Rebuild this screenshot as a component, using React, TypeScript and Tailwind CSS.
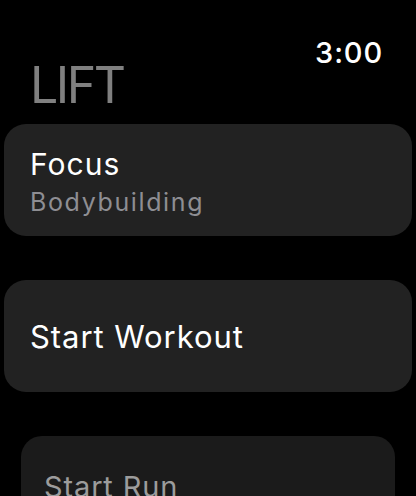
export default function App() {
  return (
    <div className="w-[416px] h-[496px] overflow-hidden bg-black font-['Inter','Liberation_Sans',sans-serif] select-none">
      {/* Status: time */}
      <div className="pt-[38px] pr-[33px] flex justify-end">
        <span className="text-[29px] leading-[29px] font-medium text-white tracking-[0.03em]">3:00</span>
      </div>

      {/* Title */}
      <h1 className="pl-[30px] text-[50px] leading-[36px] font-normal text-[#808080] tracking-[-0.05em] mb-[21px]">LIFT</h1>

      <div className="flex flex-col gap-[44px]">
        {/* Focus */}
        <div className="mx-[4px] h-[112px] rounded-[22px] bg-[#222222] px-[26px] pt-[29px] flex flex-col">
          <span className="text-[30px] leading-[22px] text-white tracking-[0.035em]">Focus</span>
          <span className="mt-[18px] text-[25px] leading-[18px] text-[#8e8e93] tracking-[0.065em]">Bodybuilding</span>
        </div>

        {/* Start Workout */}
        <div className="mx-[4px] h-[112px] rounded-[22px] bg-[#222222] px-[26px] flex items-center">
          <span className="text-[31px] leading-[23px] text-white tracking-[0.03em]">Start Workout</span>
        </div>

        {/* Start Run (scaled, partially off-screen) */}
        <div className="mx-[21px] h-[103px] rounded-[21px] bg-[#1b1b1b] px-[23px] pt-[41px] flex flex-col">
          <span className="text-[29px] leading-[20px] text-[#9c9c9c] tracking-[0.03em]">Start Run</span>
        </div>
      </div>
    </div>
  );
}
